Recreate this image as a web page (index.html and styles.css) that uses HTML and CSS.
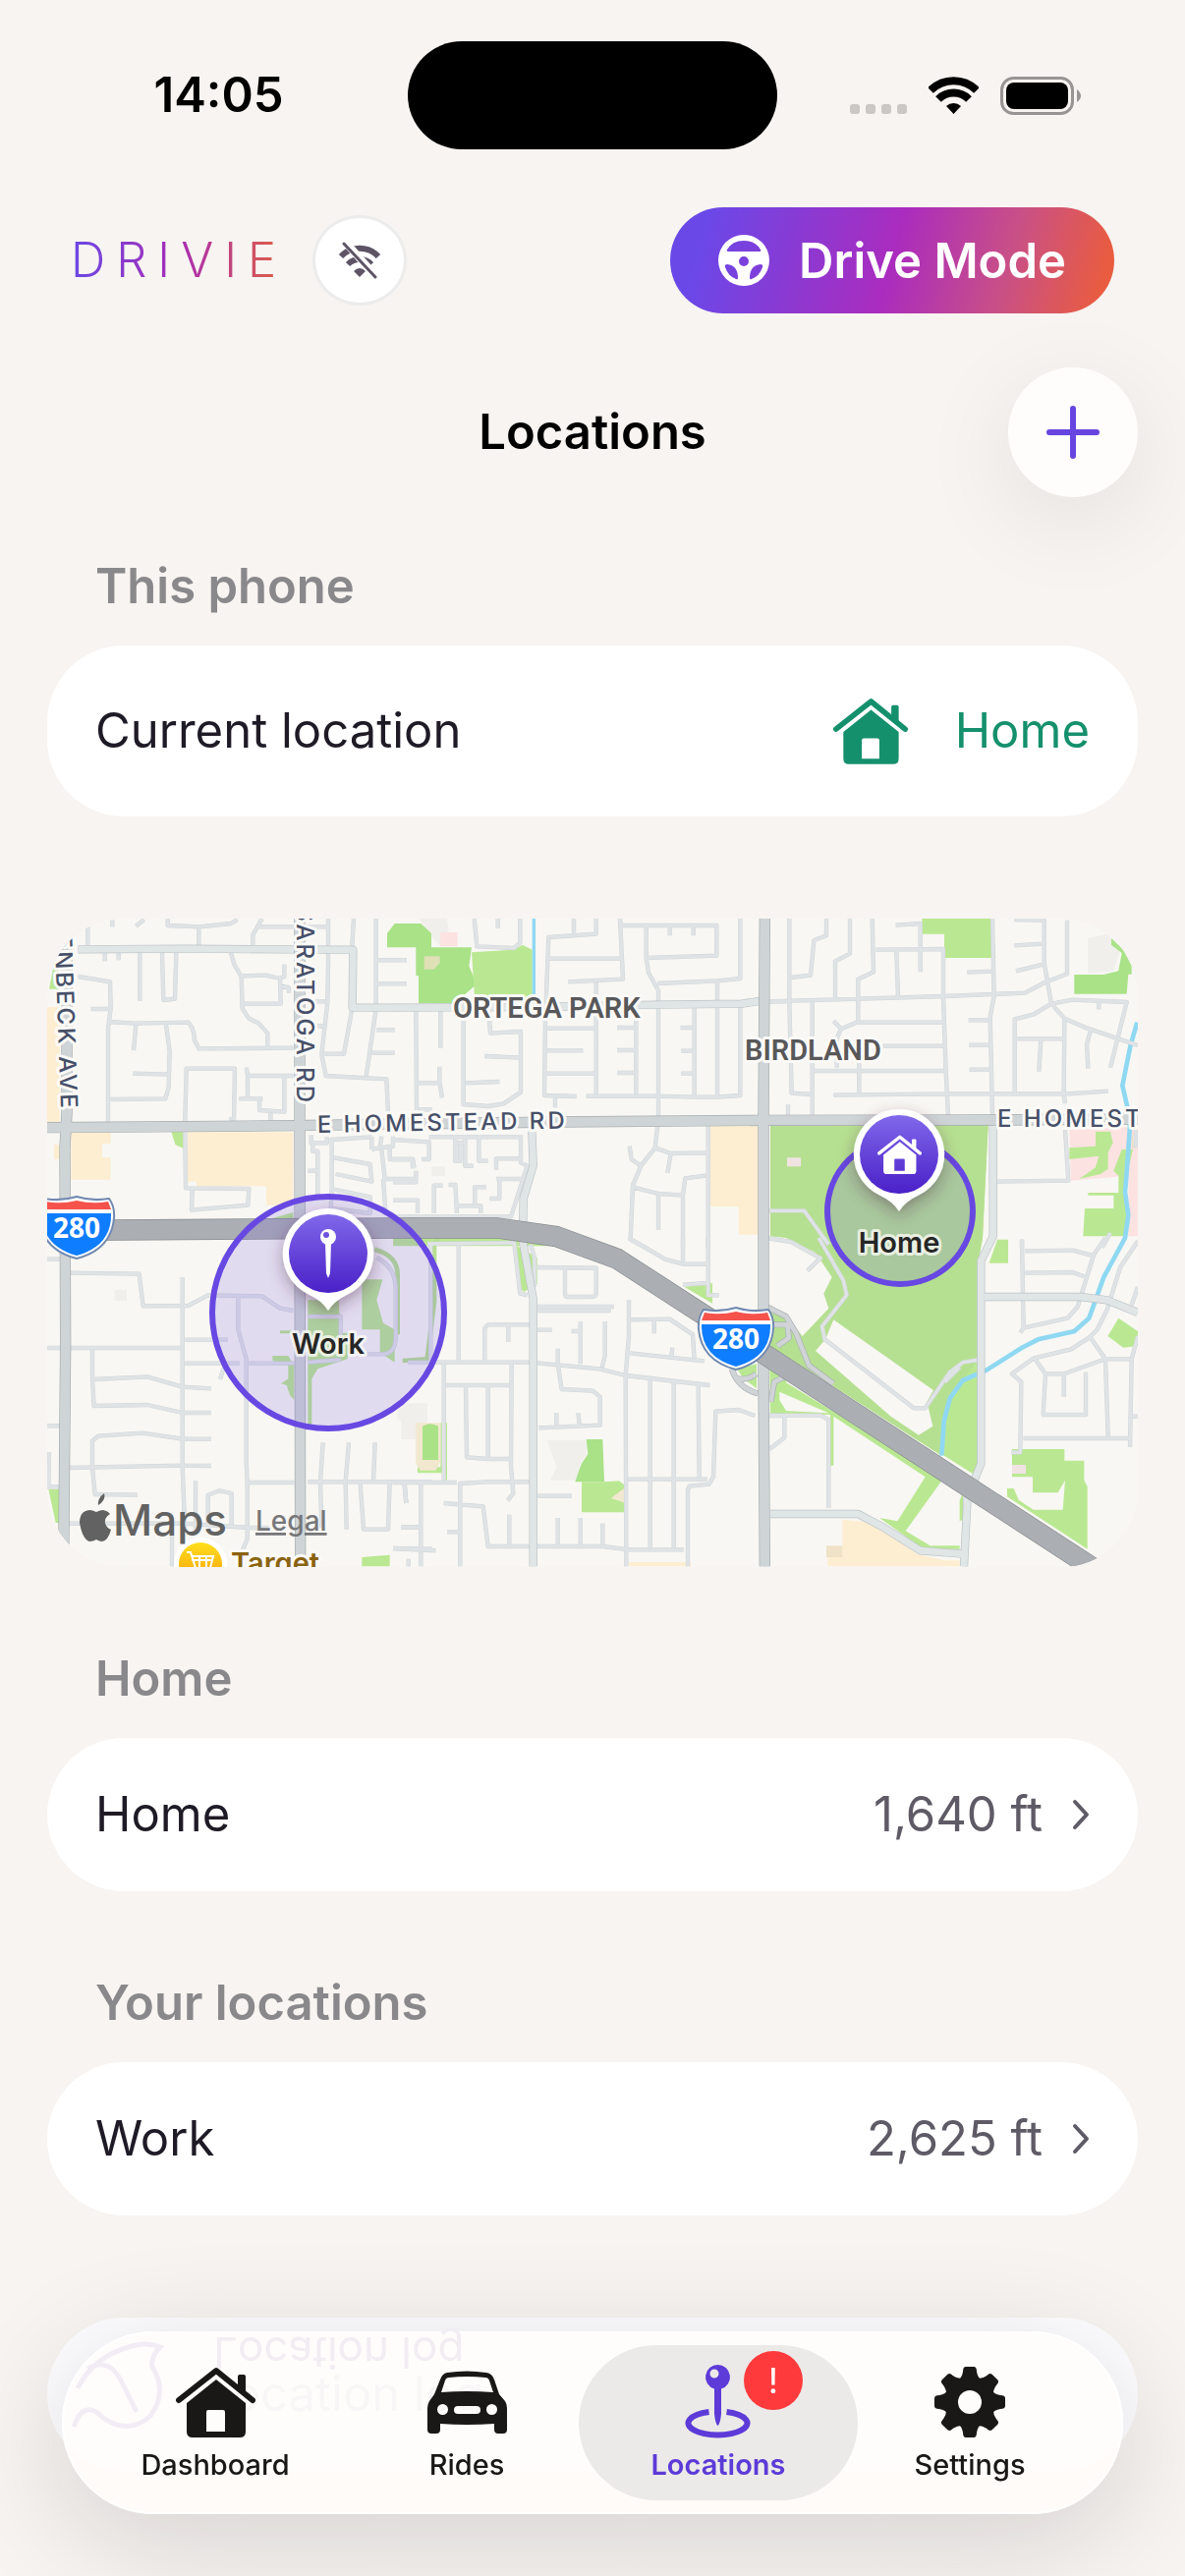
FILE: index.html
```html
<!DOCTYPE html>
<html lang="en">
<head>
  <meta charset="utf-8">
  <meta name="viewport" content="width=device-width, initial-scale=1.0">
  <title>Drivie - Locations</title>
  <link rel="stylesheet" href="styles.css">
</head>

<body>
  <!-- shared icons -->
  <svg class="sprite" aria-hidden="true">
    <symbol id="icon-house" viewBox="0 0 81 72">
      <path d="M3 34L41 4L78 34" fill="none" stroke="currentColor" stroke-width="6" stroke-linecap="round" stroke-linejoin="round"/>
      <path d="M63 10Q63 8 65 8H69Q71 8 71 10V30L63 23Z" fill="currentColor"/>
      <path fill-rule="evenodd" fill="currentColor" d="M41 13L71 37V66Q71 72 65 72H17Q11 72 11 66V37ZM33 44Q31 44 31 46V66H50V46Q50 44 48 44Z"/>
    </symbol>
    <symbol id="icon-chevron" viewBox="0 0 18 32">
      <path d="M3 3L15 16L3 29" fill="none" stroke="currentColor" stroke-width="4" stroke-linecap="round" stroke-linejoin="round"/>
    </symbol>
  </svg>

  <div class="status-bar">
    <div class="time">14:05</div>
    <div class="island"></div>
    <div class="status-icons">
      <svg width="58" height="10" viewBox="0 0 58 10" class="signal"><rect width="10" height="10" rx="3"/><rect x="16" width="10" height="10" rx="3"/><rect x="32" width="10" height="10" rx="3"/><rect x="48" width="10" height="10" rx="3"/></svg>
      <svg width="51" height="38" viewBox="0 0 51 38">
        <path d="M2 14A33 33 0 0 1 49 14M10 23A22 22 0 0 1 41 23" fill="none" stroke="#000" stroke-width="8"/>
        <path d="M25.500 38L18 30A11 11 0 0 1 33 30Z"/>
      </svg>
      <svg width="82" height="39" viewBox="0 0 82 39">
        <rect x="1.500" y="1.500" width="72" height="36" rx="12" fill="none" stroke="#979493" stroke-width="3"/>
        <rect x="6" y="6" width="63" height="27" rx="8"/>
        <path d="M78 13Q82 16 82 19.500T78 26Z" fill="#979493"/>
      </svg>
    </div>
  </div>

  <header class="header">
    <div class="brand">DRIVIE</div>
    <button class="offline-button" type="button" aria-label="Offline">
      <svg width="44" height="38" viewBox="0 0 44 38">
        <path d="M3 15A26 26 0 0 1 41 15M10 23A17 17 0 0 1 34 23" fill="none" stroke="#5d5566" stroke-width="6"/>
        <path d="M22 36L16 30Q22 24 28 30Z" fill="#5d5566"/>
        <path d="M8 1L40 37" stroke="#fff" stroke-width="8"/>
        <path d="M6 2L38 36" stroke="#5d5566" stroke-width="3" stroke-linecap="round"/>
      </svg>
    </button>
    <button class="drive-button" type="button">
      <svg width="52" height="52" viewBox="0 0 52 52">
        <path fill="#fff" fill-rule="evenodd" d="M26 0A26 26 0 1 1 26 52A26 26 0 1 1 26 0ZM10 17H42Q44 17 43 15Q38 6 26 6T9 15Q8 17 10 17ZM26 22A5 5 0 1 0 26 32A5 5 0 1 0 26 22ZM9 30Q6 30 7 33Q10 42 18 45Q20 46 20 44Q20 31 9 30ZM43 30Q46 30 45 33Q42 42 34 45Q32 46 32 44Q32 31 43 30Z"/>
      </svg>
      Drive Mode
    </button>
  </header>

  <div class="title-bar">
    <h1>Locations</h1>
    <button class="add-button" type="button" aria-label="Add location">
      <svg width="54" height="54" viewBox="0 0 54 54"><path d="M27 3V51M3 27H51" stroke="#6645e0" stroke-width="6" stroke-linecap="round"/></svg>
    </button>
  </div>

  <main class="content">
    <h2>This phone</h2>
    <div class="card current">
      <span>Current location</span>
      <span class="place">
        <svg width="76" height="68"><use href="#icon-house"/></svg>
        Home
      </span>
    </div>

    <div class="map">
      <svg viewBox="0 0 1110 660">
        <defs>
          <linearGradient id="pin-fill" x1="0" y1="0" x2="0" y2="1">
            <stop offset="0" stop-color="#8068ea"/>
            <stop offset="1" stop-color="#4a20c8"/>
          </linearGradient>
          <linearGradient id="shop-fill" x1="0" y1="0" x2="0" y2="1">
            <stop offset="0" stop-color="#ffdf1c"/>
            <stop offset="1" stop-color="#f79a0c"/>
          </linearGradient>
          <filter id="pin-shadow" x="-50%" y="-50%" width="200%" height="200%">
            <feDropShadow dx="0" dy="6" stdDeviation="8" flood-color="#4a2a40" flood-opacity=".4"/>
          </filter>

          <!-- residential streets, six tiles -->
          <g id="streets">
            <path transform="translate(-24 -45)" d="M148 45V130M223 50V70M295 68L320 48M392 45V66L490 70L585 60L605 48M487 70V130M680 45L652 95V130M670 70H880M882 45V190L880 300L862 460L875 525L1060 535L1065 640M960 45L955 130M1028 45V320L1005 480L998 525M1028 172H1122M1028 244H1122M200 148V175M242 148V172M307 145V297M375 150L379 294L414 290L418 150M118 222L216 238L218 320L210 380V668M158 321H215M210 360L290 365L455 362Q475 385 473 415L487 442L775 440M295 370L288 447M387 370L398 450L395 560L385 595L218 597M285 518L398 521M585 150L595 185L617 222L620 320L640 350L670 365L697 395V440M617 220L690 218L735 228L748 222V185M735 228L737 305H622M735 250L762 256V272M445 665L449 503H597L594 665M580 658H600M632 500L637 525H775M636 525V595M610 595H682M672 590V630L748 635V525M706 635V662M835 298H880M845 372L875 375M955 320L930 458H862M1030 385H1085M1015 455H1085M445 695L447 868L640 870L637 920L465 935L467 870M830 705V730H878V712M835 730V755H850V900M820 815H850M1015 712V750M893 870V720L1015 712M893 870L890 930L1010 945V895L893 870M900 775L1010 795L1015 848L905 825M1045 710L1040 745L1015 750M1040 745L1080 740V710M1070 745V780H1140L1145 805M1045 750L1055 840H1145M1050 840L1058 950"/>
            <path transform="translate(1056 -45)" d="M248 45L256 130L370 135L388 118V45M320 45V75M552 45V95M620 45V92L475 102L465 350L462 585L560 588M472 167H695M693 45L702 230L535 238M620 240V580M693 66H988V158L775 165M773 70V165L780 210L810 265V650M845 66V97M917 66V97M1060 45V228L990 235L808 243M990 235V585M70 325L72 630M145 325V440M142 497V545L150 592M72 547H142M78 628H120M215 350V612L290 618L338 610L390 575V390L297 395L293 330M280 465L390 470M222 547L325 543M465 380H618M468 448H580M468 518H618M590 587H810L920 590H990L1060 585V315M742 350V580M684 378H742M684 447H742M684 516H742M920 315V588M878 378H920M880 449H918M880 518H918M495 590V622M808 675L800 745L757 800L732 860L725 1025L780 1055M722 740L728 780L757 800M800 745L848 762L960 760M848 762L838 822M732 865L810 885L885 890L892 838L955 830M810 885V995M885 890V1050M962 672V1050M1145 298H1200M315 812V778H390M390 705V790L410 800L360 955H0M0 720L110 727V780H88M110 712H385M190 705V785H205V730M220 705V800H245M262 705V785H290M190 730H225M0 780H60V808M0 850H70V815M0 905H75V945M125 945V860H152M170 858H190L195 945M250 860V925M190 922H268V945M285 865H245M315 840H395M325 840V900H295"/>
            <path transform="translate(2196 -45)" d="M70 45V300L77 578L140 582M75 225L135 218L145 112L183 97V45M255 45V152L210 175V290M323 45L327 208L280 230V360L228 382L205 358M228 382L215 410V500M0 298L210 292L545 282L790 272L850 240L918 214V50M140 300V650M280 362H545M355 434H545M145 510H545M283 480V580M205 584L548 580H920L1043 572M395 65L470 60V208M335 140L540 138V282L548 510L555 650M397 140L402 285M690 45L695 282L683 345L690 645M613 209L690 206M617 355H685M618 431H685M620 506H688M757 48L848 50V180L870 305L910 350L908 580L912 610M757 127L848 122M762 205L848 184M870 305L935 293L1100 300L1050 500M870 305L815 338L758 352V575M760 412H905M838 415L832 512M910 350L980 380L1134 432M990 385L978 430L982 502M1015 298V322M66 612V652M912 690L922 845L705 848M0 937H115L190 1040M1050 1005L1025 1050M780 1025V1050M1128 690V745"/>
            <path transform="translate(-24 975)" d="M24 65H70M90 107L305 110L317 208L455 207L515 175L680 178L735 215L775 222M437 120V700L445 900M24 336H437M445 311H575M445 383H612M640 383H778M162 340V430L167 513L330 510L437 534H525M167 432L330 424L437 455L525 460M24 574H70M525 614H437L315 596L180 605L162 620V700L170 783L300 785M85 702L437 695L525 696M607 178V280L632 370V680L635 750V920L620 955M567 385L552 432M640 747H778M820 745H1200M24 760H65M30 655L28 755M477 742V900M515 880V785L550 772L587 780V880M90 872H440L640 885H700M405 910V1003M866 625L858 745L862 885M945 625L935 745L938 890M1025 625L1020 740M980 750L990 890H1065L1070 745M1115 750L1120 810M1105 883H1165M1080 948L1200 950M820 240H920V330M1030 60Q1090 90 1088 160V310Q1085 352 1050 355H1000M820 380L920 372"/>
            <path transform="translate(1056 975)" d="M115 20V375M45 380H430M200 20V375M105 18L370 15L388 170L410 175M420 20L432 60V150M440 90L620 92V170Q620 180 600 180H535Q525 180 525 170V92M440 210H675M440 222H665M280 375V275L290 265H420M352 270V318M440 281H485M572 255V385M545 285H572M647 255V360L638 395M503 338V385L515 462L610 467L632 485V572L445 580M499 535V578M565 535L570 575M440 382L630 400L710 420L967 450M720 190V300L710 420L712 1003M722 250L845 248L915 295L920 370M797 250V292M725 352L950 376M853 335L850 360M785 435V945M857 440V945M932 450L935 735M718 737H960M1105 543L1055 525L985 530L978 730L965 752L905 758L900 770V1003M155 385V740M162 450H360M222 455L225 670L290 675H360M290 450V675M362 385L360 700L367 780L350 802M0 747H195M205 1003V750L285 745H420M155 810L275 820L290 942H640L720 952H888M35 750L40 810M85 750V1003M25 883H85M0 948L130 955M165 898H200M355 845V940M442 788H545M503 855V940M572 855V940M640 872V940M47 980V1003M885 0V78M962 0V175H995M720 0L830 65L885 80H960M885 143L960 138M1150 543H1195V610L1150 645"/>
            <path transform="translate(2196 975)" d="M0 0L75 12L165 62L125 100M160 0L235 130L245 175L170 270L178 310L450 520H485L560 410L600 380L650 372M545 440L590 395M10 542H165L190 555V825M780 5L785 275L775 290M785 275L920 245L950 210L1000 50L1035 0M790 40L935 38L1000 55M790 107L935 105L970 118M1134 10L1080 90L1040 220L1010 280L985 305L930 340L815 368L750 415L778 440L775 655H748M1134 150L1115 205M820 370L852 415H910L1035 370H1115L1134 300M852 415L845 540H975V410M908 415V485M990 305L1035 370L1043 605M1115 370L1110 638M785 612H1110M1115 545H1134"/>
          </g>

          <g id="avenues">
            <path d="M94 94L421 92L856 95H934L932 272H1056L1516 270L1856 263L2121 260L2181 251"/>
            <path d="M1480 650L1484 755L1454 855L1453 930V990L1484 1160V1978"/>
            <path d="M2888 630V970L2851 1045V1665L2810 1765L2799 1978"/>
            <path d="M2861 1155H3156L3236 1165L3330 1203"/>
            <path d="M2208 1818H2476L2546 1855L2666 1930L2796 1940"/>
          </g>

          <g id="roads">
            <path d="M0 638L416 635L751 632L1556 621L2191 616L2886 615L3330 612"/>
            <path d="M60 0V595L54 700L56 1300L50 1978"/>
            <path d="M771 0V620L773 1978"/>
            <path d="M2191 0L2187 616V1375L2191 1978"/>
          </g>

          <g id="ramps">
            <path d="M2186 1180L2256 1215L2286 1265L2326 1365L2400 1420M2090 1375Q2110 1435 2170 1450M2110 1405Q2140 1410 2165 1390M2210 1475L2220 1415L2250 1400M2200 1240H2260L2265 1280L2230 1305"/>
          </g>

          <path id="freeway" d="M0 953L206 951L1056 945H1376L1556 971L1741 1039L2196 1334L3196 1985"/>
        </defs>

        <!-- base map is drawn at 3x -->
        <svg width="1110" height="660" viewBox="0 0 3330 1980">
          <rect class="land" width="3330" height="1980"/>

          <g class="school">
            <path transform="translate(-24 -45)" d="M24 315H62V668H24ZM97 697H218V733H192V775H218V842H97ZM453 697H775V920H693V862H480V848H453ZM45 735H62V780H45Z"/>
            <path transform="translate(1056 -45)" d="M967 678H1115V1010H1055V925H967Z"/>
            <path transform="translate(1056 975)" d="M720 990H910V1003H720Z"/>
            <path transform="translate(2196 975)" d="M232 860L330 870L460 965L545 985H590V1003H187V970H232Z"/>
          </g>
          <g class="building">
            <path transform="translate(1056 -45)" d="M80 45H165L170 80L145 130L117 100ZM118 802H158V832H118Z"/>
            <path transform="translate(2196 -45)" d="M982 105L1040 92L1080 140L1060 205L982 212Z"/>
            <path transform="translate(-24 975)" d="M1100 505H1185V560L1165 615H1105V560L1090 550ZM230 158H267V192H230Z"/>
            <path transform="translate(1056 975)" d="M470 618H590V660L570 690V740H480L500 700Z"/>
          </g>
          <path class="medical" transform="translate(2196 -45)" d="M925 690L1130 680V745H1134V1015H1105V830L930 845Z"/>
          <path class="medical" transform="translate(1056 -45)" d="M145 87H197V130H145Z"/>

          <g class="park">
            <path transform="translate(1056 -45)" d="M-18 90L5 60H85L117 90V133H240L232 190L255 245L190 303H78V220H70V133H-18Z"/>
            <path transform="translate(2196 -45)" d="M555 45H670V80L640 92L600 80H555ZM1053 105L1090 140L1115 190V215H1105L1100 275H940V216H1030L1075 205L1085 150L1053 125Z"/>
            <path transform="translate(1056 975)" d="M590 615H640L645 745H556L575 690L595 660Z"/>
          </g>
          <g class="grass">
            <path transform="translate(-24 -45)" d="M45 180H60V260H30ZM403 695H440V747L415 735ZM660 975L775 942V965Z"/>
            <path transform="translate(1056 -45)" d="M240 148L370 140L395 125L425 140V300H250ZM0 1018H330L480 1045H0Z"/>
            <path transform="translate(2196 -45)" d="M475 45H685L700 165H543V92H475ZM925 745L1005 740V695H1050L1058 730L1043 760V810L1020 825L955 840L1005 805L1015 770L925 780ZM1085 750H1118V690L1120 745L1100 830V1015H967L972 930H1060V890H982V882H1075V830L1060 815Z"/>
            <path transform="translate(-24 975)" d="M28 767H62V870H50ZM985 975L1070 968V1003H985ZM820 190H915V220L925 290H960V310L940 370L850 400L832 430V570H820ZM712 360H760L778 390V495L765 480L755 450L738 445L760 430V390L712 375ZM735 283H775V292H735ZM985 127H1048L1030 190L1050 260L1085 280V380L1040 350V280H985Z"/>
            <path transform="translate(1056 975)" d="M370 20L440 60V140L400 165L385 150ZM890 150L975 138V200ZM645 745L690 742L707 755V838H576V745ZM145 565H165V740H155V718H75V700H145ZM1050 400L1110 385V460L1070 430ZM1150 225L1200 250V350L1150 330ZM1150 400L1200 430V537H1152Z"/>
            <path transform="translate(2196 975)" d="M12 -345H677L660 0L645 80V730L12 330ZM705 5H738V77H680ZM1075 245L1134 285V330L1090 335L1042 300ZM12 400L40 430L540 735L425 895L500 940H590V950H480L345 855L400 865L485 730L205 545V695H195V540L20 535ZM600 780V860L590 865V800ZM750 645H910V680H970V740L980 760V950L735 790V765H755L770 800L815 830H905L912 740L890 778H813V730H750Z"/>
            <path class="lawn" d="M1196 975L1182 990V1170L1160 1345L1085 1350" />
            <path class="lawn" d="M1000 1010Q1072 1030 1070 1090V1270" />
          </g>
          <path class="preserve" transform="translate(2196 975)" d="M12 -345H677L660 0L645 80V372L600 435L560 490L542 560L535 665L12 330Z"/>
          <g class="land">
            <path transform="translate(2196 975)" d="M12 -5L60 0L150 45L200 120L175 170L190 215L110 300L60 240L12 205ZM205 250L510 465L490 500L508 575L465 602L380 545L150 345L180 310ZM40 470L190 535L60 528L40 495Z"/>
          </g>
          <path fill="#f2e8d0" d="M1126 1540H1201V1660L1186 1685H1140L1126 1665Z"/>
          <path class="park" d="M1146 1550Q1169 1535 1194 1550V1653H1146Z"/>
          <path fill="#dfe0b5" d="M1151 115H1199V135L1181 155H1151Z"/>
          <path fill="#f2e8d0" d="M1761 1740V1783L1721 1770Z"/>
          <path fill="#efe2c6" d="M2379 1915H2428V1950H2379Z"/>
          <path fill="#f0e3e2" d="M2259 730H2301V757H2259ZM2946 1668H2988V1695H2946Z"/>

          <path class="water" stroke-width="10" d="M1486 0V255"/>
          <path class="water" stroke-width="14" d="M3328 317L3308 385L3294 455L3283 510L3298 575L3306 635L3296 775L3291 835L3301 905L3291 975L3226 1095L3201 1165L3181 1220L3136 1260L3026 1285L2976 1310L2866 1380L2796 1410L2756 1465L2738 1535L2731 1640"/>

          <use href="#streets" class="street-edge"/>
          <use href="#streets" class="street"/>
          <use href="#avenues" class="avenue-edge"/>
          <use href="#avenues" class="avenue"/>
          <use href="#ramps" class="ramp-edge"/>
          <use href="#ramps" class="ramp"/>
          <use href="#roads" class="road-edge"/>
          <use href="#roads" class="road"/>
          <use href="#freeway" class="freeway-edge"/>
          <use href="#freeway" class="freeway"/>
        </svg>

        <!-- street and district names -->
        <g class="street-name">
          <text x="275" y="218" transform="rotate(-1 275 218)">E HOMESTEAD RD</text>
          <text x="967" y="212">E HOMEST</text>
          <text text-anchor="end" transform="translate(254 190) rotate(90)">SARATOGA RD</text>
          <text text-anchor="end" transform="translate(14 196) rotate(88)">ENBECK AVE</text>
        </g>
        <g class="district">
          <text x="413" y="101">ORTEGA PARK</text>
          <text x="710" y="144">BIRDLAND</text>
        </g>

        <!-- interstate shields -->
        <g id="shield-west" transform="translate(30 283)">
          <path d="M-33 2Q-16 5 0 0Q16 5 33 2Q39 10 38 22Q35 54 0 63Q-35 54 -38 22Q-39 10 -33 2Z" fill="#fff" stroke="#7189b0" stroke-width="2"/>
          <path d="M-32 5Q-16 8 0 4Q16 8 32 5L35 13H-35Z" fill="#f5524b"/>
          <path d="M-35 17H35Q36 50 0 60Q-36 50 -35 17Z" fill="#0f7dff"/>
          <text y="42" class="shield-number">280</text>
        </g>
        <g id="shield-east" transform="translate(701 396)">
          <path d="M-33 2Q-16 5 0 0Q16 5 33 2Q39 10 38 22Q35 54 0 63Q-35 54 -38 22Q-39 10 -33 2Z" fill="#fff" stroke="#7189b0" stroke-width="2"/>
          <path d="M-32 5Q-16 8 0 4Q16 8 32 5L35 13H-35Z" fill="#f5524b"/>
          <path d="M-35 17H35Q36 50 0 60Q-36 50 -35 17Z" fill="#0f7dff"/>
          <text y="42" class="shield-number">280</text>
        </g>

        <!-- geofences -->
        <circle class="fence" cx="286" cy="401" r="118"/>
        <circle class="fence" cx="868" cy="298" r="74"/>

        <!-- pins -->
        <g transform="translate(286 341)">
          <path filter="url(#pin-shadow)" fill="#fff" d="M0-46A46 46 0 0 1 19 42Q6 48 0 58Q-6 48-19 42A46 46 0 0 1 0-46Z"/>
          <circle r="40" fill="url(#pin-fill)"/>
          <circle cy="-17" r="8" fill="#fff"/>
          <circle cx="-2" cy="-19" r="3" fill="#6c50dd"/>
          <path d="M-3-11H3L2 20L0 25L-2 20Z" fill="#fff"/>
          <text class="pin-label" y="102">Work</text>
        </g>
        <g transform="translate(867 240)">
          <path filter="url(#pin-shadow)" fill="#fff" d="M0-46A46 46 0 0 1 19 42Q6 48 0 58Q-6 48-19 42A46 46 0 0 1 0-46Z"/>
          <circle r="40" fill="url(#pin-fill)"/>
          <g color="#fff"><use href="#icon-house" x="-22" y="-20" width="45" height="40"/></g>
          <text class="pin-label" y="100">Home</text>
        </g>

        <!-- shop -->
        <circle cx="156" cy="657" r="27" fill="#fff"/>
        <circle cx="156" cy="657" r="22" fill="url(#shop-fill)"/>
        <path d="M142 645H146L151 661H166L169 649H148M147 653H168M155 649V660M162 649V660" fill="none" stroke="#fff" stroke-width="2"/>
        <text class="shop-name" x="187" y="666">Target</text>

        <!-- attribution -->
        <g class="attribution">
          <path d="M52 597Q51 590 58 585Q60 592 52 597ZM33 615Q33 603 43 602Q46 602 50 604Q54 602 57 602Q62 603 64 606Q58 610 59 615Q60 620 65 622Q62 633 56 634Q53 634 50 632Q47 634 43 634Q36 632 33 615Z"/>
          <text x="67" y="628" class="maps-word">Maps</text>
          <a href="#legal"><text x="212" y="623" class="legal">Legal</text></a>
        </g>
      </svg>
    </div>

    <h2>Home</h2>
    <a class="card row" href="#home">
      <span>Home</span>
      <span class="distance">1,640 ft <svg width="18" height="32"><use href="#icon-chevron"/></svg></span>
    </a>

    <h2>Your locations</h2>
    <a class="card row" href="#work">
      <span>Work</span>
      <span class="distance">2,625 ft <svg width="18" height="32"><use href="#icon-chevron"/></svg></span>
    </a>

    <a class="card row log-row" href="#log">
      <span>Location log</span>
    </a>
  </main>

  <nav class="tab-bar">
    <div class="reflection" aria-hidden="true">Location log</div>
    <svg class="glass" width="110" height="110" viewBox="0 0 110 110" aria-hidden="true">
      <path d="M24 36Q46 24 58 48L74 80M10 95Q20 66 40 86Q66 104 88 84Q106 60 90 34Q88 24 98 14Q84 8 66 14Q30 24 14 56" fill="none" stroke="#f2edf5" stroke-width="5"/>
    </svg>
    <a class="tab" href="#dashboard">
      <svg width="81" height="72"><use href="#icon-house"/></svg>
      Dashboard
    </a>
    <a class="tab" href="#rides">
      <svg width="81" height="72" viewBox="0 -4 81 72">
        <path fill="currentColor" fill-rule="evenodd" d="M20 2Q40-1 60 2Q66 3 68 9L73 24L79 31Q81 34 81 38V60Q81 64 77 64H72Q68 64 68 60V54Q40 56 13 54V60Q13 64 9 64H4Q0 64 0 60V38Q0 34 2 31L7 24L13 9Q15 3 20 2ZM22 7Q19 7 18 10L14 22Q40 20 67 22L63 10Q62 7 59 7Q40 5 22 7ZM15.500 34A5.500 5.500 0 1 0 15.500 45A5.500 5.500 0 1 0 15.500 34ZM65.500 34A5.500 5.500 0 1 0 65.500 45A5.500 5.500 0 1 0 65.500 34ZM31 36A4 4 0 0 0 31 44H50A4 4 0 0 0 50 36Z"/>
      </svg>
      Rides
    </a>
    <a class="tab active" href="#locations" aria-current="page">
      <svg width="68" height="72" viewBox="0 2 68 72" overflow="visible">
        <path fill="currentColor" fill-rule="evenodd" d="M33.500 0A12.500 12.500 0 0 1 37 24.500V50Q36 60 33.500 62Q31 60 30 50V24.500A12.500 12.500 0 0 1 33.500 0ZM30 4.500A4.500 4.500 0 1 0 30 13.500A4.500 4.500 0 1 0 30 4.500Z"/>
        <path d="M24.500 48A30 12 0 1 0 42.500 48" fill="none" stroke="currentColor" stroke-width="6"/>
      </svg>
      Locations
      <span class="badge">!</span>
    </a>
    <a class="tab" href="#settings">
      <svg width="72" height="72" viewBox="-36 -36 72 72">
        <circle r="19" fill="none" stroke="currentColor" stroke-width="14"/>
        <g fill="currentColor">
          <path id="tooth" d="M-12-22Q-8-25-7-31Q-7-36-4-36H4Q7-36 7-31Q8-25 12-22Z"/>
          <use href="#tooth" transform="rotate(45)"/>
          <use href="#tooth" transform="rotate(90)"/>
          <use href="#tooth" transform="rotate(135)"/>
          <use href="#tooth" transform="rotate(180)"/>
          <use href="#tooth" transform="rotate(225)"/>
          <use href="#tooth" transform="rotate(270)"/>
          <use href="#tooth" transform="rotate(315)"/>
        </g>
      </svg>
      Settings
    </a>
  </nav>
</body>
</html>
```
FILE: styles.css
```css
* {
  box-sizing: border-box;
}

body {
  font-family: Inter, "Liberation Sans", sans-serif;
  font-size: 49px;
  line-height: 60px;
  color: #1f1b26;
  background-color: #f7f4f1;
  margin: 0;
  padding: 0;
}

a {
  color: inherit;
  text-decoration: none;
}

button {
  font-family: inherit;
  border: none;
  cursor: pointer;
  padding: 0;
}

svg {
  display: block;
  flex-shrink: 0;
}

.sprite {
  position: absolute;
  width: 0;
  height: 0;
}

/* status bar */
.status-bar {
  display: grid;
  grid-template-columns: 1fr 376px 1fr;
  align-items: center;
  padding-top: 42px;
}

.time {
  color: #000;
  font-size: 49px;
  font-weight: 600;
  text-align: center;
  padding-left: 30px;
}

.island {
  height: 110px;
  border-radius: 56px;
  background-color: #000;
}

.status-icons {
  display: flex;
  align-items: center;
  justify-content: flex-end;
  gap: 22px;
  padding-right: 106px;
}

.signal {
  fill: #cac7c5;
  margin-top: 28px;
}

/* header */
.header {
  display: flex;
  align-items: center;
  padding: 59px 72px 0;
}

.brand {
  font-size: 49px;
  font-weight: 300;
  letter-spacing: 11px;
  background-image: linear-gradient(90deg, #6a48e6, #a92cb4 50%, #e0603f);
  background-clip: text;
  -webkit-background-clip: text;
  color: transparent;
}

.offline-button {
  display: flex;
  align-items: center;
  justify-content: center;
  width: 96px;
  height: 92px;
  margin-left: 26px;
  border: 3px solid #ececec;
  border-radius: 50%;
  background-color: #fff;
}

.drive-button {
  display: flex;
  align-items: center;
  gap: 30px;
  height: 108px;
  margin-left: auto;
  padding: 0 49px;
  border-radius: 54px;
  color: #fff;
  font-size: 49px;
  font-weight: 600;
  background-image: linear-gradient(105deg, #6a48e8 8%, #aa2cbe 50%, #c95086 75%, #e95c40 96%);
}

/* title */
.title-bar {
  display: grid;
  grid-template-columns: 1fr auto 1fr;
  align-items: center;
  padding: 55px 48px 0;
}

.title-bar h1 {
  grid-column: 2;
  margin: 0;
  color: #000;
  font-size: 49px;
  font-weight: 600;
}

.add-button {
  display: flex;
  align-items: center;
  justify-content: center;
  justify-self: end;
  width: 132px;
  height: 132px;
  border-radius: 50%;
  background-color: #fffdfb;
  box-shadow: 0 24px 100px rgba(0, 0, 0, 0.09);
}

/* list */
.content {
  padding: 61px 48px 108px;
}

.content h2 {
  margin: 0;
  padding: 0 49px 30px;
  color: #89888b;
  font-size: 49px;
  font-weight: 600;
}

.card {
  display: flex;
  align-items: center;
  justify-content: space-between;
  padding: 0 49px;
  border-radius: 78px;
  background-color: #fff;
}

.current {
  height: 174px;
}

.row {
  height: 156px;
  margin-bottom: 84px;
}

.place {
  display: flex;
  align-items: center;
  gap: 48px;
  color: #15906c;
}

.distance {
  display: flex;
  align-items: center;
  gap: 30px;
  color: #5f5b66;
}

.log-row {
  margin: 104px 0 0;
  padding-left: 160px;
  color: #dfdae3;
  background-color: #fdfdff;
}

/* map */
.map {
  margin: 104px 0 84px;
  border-radius: 78px;
  overflow: hidden;
}

.map svg {
  width: 100%;
}

.land {
  fill: #f8f7f3;
}

.school {
  fill: #fdeed1;
}

.building {
  fill: #f0efeb;
}

.medical {
  fill: #fce2e1;
}

.park {
  fill: #a9e287;
}

.grass {
  fill: #bae892;
}

.lawn {
  fill: none;
  stroke: #b7e092;
  stroke-width: 14px;
}

.preserve {
  fill: #b6e091;
}

.water {
  fill: none;
  stroke: #8fd8f2;
}

.street-edge,
.street,
.avenue-edge,
.avenue,
.ramp-edge,
.ramp,
.road-edge,
.road,
.freeway-edge,
.freeway {
  fill: none;
  stroke-linejoin: round;
}

.street-edge {
  stroke: #cfd4d8;
  stroke-width: 13px;
}

.street {
  stroke: #dfe3e5;
  stroke-width: 10px;
}

.avenue-edge {
  stroke: #bcc3c6;
  stroke-width: 25px;
}

.avenue {
  stroke: #e0e5e6;
  stroke-width: 21px;
}

.ramp-edge {
  stroke: #a9afb3;
  stroke-width: 18px;
}

.ramp {
  stroke: #d0d4d6;
  stroke-width: 14px;
}

.road-edge {
  stroke: #a6acae;
  stroke-width: 34px;
}

.road {
  stroke: #cfd4d6;
  stroke-width: 30px;
}

.freeway-edge {
  stroke: #878b8e;
  stroke-width: 64px;
}

.freeway {
  stroke: #abafb3;
  stroke-width: 60px;
}

.fence {
  fill: rgba(104, 72, 224, 0.16);
  stroke: #6848e2;
  stroke-width: 6px;
}

.map text {
  paint-order: stroke;
  stroke: #fbfaf7;
  stroke-width: 6px;
  stroke-linejoin: round;
}

.street-name {
  fill: #475069;
  font-size: 24px;
  font-weight: 500;
  letter-spacing: 3px;
}

.district {
  fill: #58585a;
  font-family: Roboto, sans-serif;
  font-size: 29px;
  font-weight: 600;
}

.map .shield-number {
  fill: #fff;
  stroke: none;
  font-family: "Open Sans", sans-serif;
  font-size: 28px;
  font-weight: 700;
  text-anchor: middle;
}

.map .pin-label {
  fill: #262626;
  stroke: rgba(250, 250, 245, 0.8);
  font-size: 29px;
  font-weight: 600;
  text-anchor: middle;
}

.shop-name {
  fill: #8a6310;
  font-size: 29px;
  font-weight: 600;
}

.attribution {
  fill: #626262;
}

.map .maps-word {
  stroke: none;
  font-size: 44px;
  font-weight: 500;
}

.map .legal {
  fill: #77777a;
  stroke: none;
  font-size: 28px;
  font-weight: 500;
  text-decoration: underline;
}

/* tab bar */
.tab-bar {
  position: fixed;
  left: 63px;
  right: 63px;
  bottom: 63px;
  display: grid;
  grid-template-columns: repeat(4, 1fr);
  height: 186px;
  padding: 12px 26px;
  border: 2px solid #fff;
  border-radius: 93px;
  background-color: rgba(255, 253, 251, 0.8);
  box-shadow: 0 24px 120px rgba(40, 20, 30, 0.16);
}

.glass {
  position: absolute;
  left: 0;
  top: 0;
}

/* underside of the row behind the glass */
.reflection {
  position: absolute;
  left: 152px;
  top: 0;
  color: #f1edf2;
  font-size: 44px;
  line-height: 40px;
  transform: scaleY(-1);
}

.tab {
  position: relative;
  display: flex;
  flex-direction: column;
  align-items: center;
  gap: 10px;
  padding-top: 22px;
  color: #1a1817;
  font-size: 29px;
  font-weight: 500;
  line-height: 36px;
}

.tab.active {
  margin: 0 -14px;
  border-radius: 80px;
  color: #5c3bd8;
  background-color: #ebeae8;
  font-weight: 600;
}

.badge {
  position: absolute;
  top: 6px;
  left: 168px;
  width: 60px;
  height: 60px;
  border-radius: 50%;
  color: #fff;
  background-color: #ff3a3c;
  font-size: 36px;
  font-weight: 400;
  line-height: 60px;
  text-align: center;
}
```
